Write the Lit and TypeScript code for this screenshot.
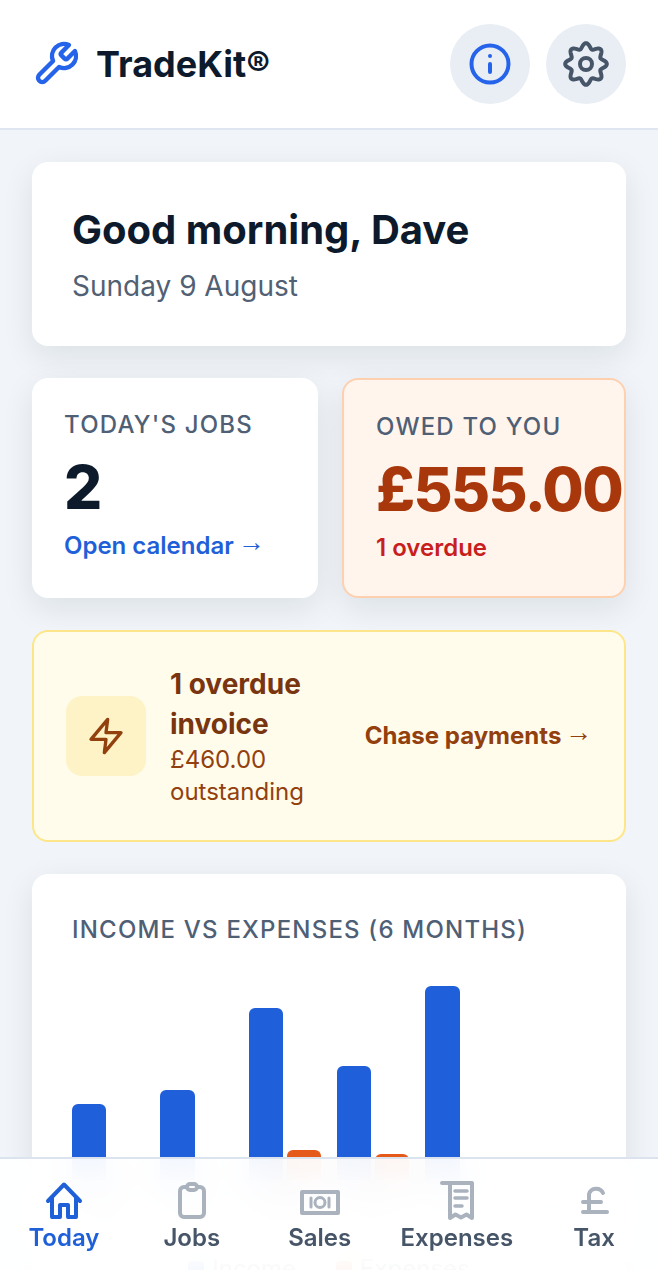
import { css, html, LitElement, svg } from "lit";
import { customElement } from "lit/decorators.js";
import { classMap } from "lit/directives/class-map.js";

// wavy 8-lobe outline for the settings cog
function gearPath() {
  const pts: string[] = [];
  for (let i = 0; i < 160; i++) {
    const t = (i / 160) * Math.PI * 2;
    const r = 18.2 + 2.6 * Math.cos(8 * t);
    pts.push(`${(24 + r * Math.sin(t)).toFixed(2)} ${(24 - r * Math.cos(t)).toFixed(2)}`);
  }
  return "M" + pts.join("L") + "Z";
}

const months = [
  { label: "Mar", income: 76, expense: 0 },
  { label: "Apr", income: 90, expense: 0 },
  { label: "May", income: 172, expense: 30 },
  { label: "Jun", income: 114, expense: 26 },
  { label: "Jul", income: 194, expense: 0 },
  { label: "Aug", income: 0, expense: 0 },
];

const navIcons = {
  home: svg`<path d="M6 22 22 5.5 38 22" /><path d="M10 19v19h8V26h8v12h8V19" />`,
  jobs: svg`<rect x="10" y="8" width="24" height="30" rx="4" /><rect x="17" y="5" width="10" height="6" rx="3" fill="#fff" />`,
  sales: svg`<rect x="4" y="13" width="36" height="21" /><path d="M13 19v9M31 19v9" stroke-width="3" /><circle cx="22" cy="23.5" r="5" stroke-width="3" />`,
  expenses: svg`<path d="M7 4H37V39L31.5 35.5 26 38.5 20.5 35.5 15 39V4" /><path d="M20 12h12M20 19h12M20 27h7" stroke-width="3.5" />`,
  tax: svg`<path d="M31 14a7.5 7.5 0 0 0-14 1v18" /><path d="M11 33h24M11 23h18" />`,
};

const navItems: { key: keyof typeof navIcons; label: string; active?: boolean }[] = [
  { key: "home", label: "Today", active: true },
  { key: "jobs", label: "Jobs" },
  { key: "sales", label: "Sales" },
  { key: "expenses", label: "Expenses" },
  { key: "tax", label: "Tax" },
];

@customElement("app-root")
export class AppRoot extends LitElement {
  static styles = css`
    :host {
      display: block;
      position: relative;
      height: 1270px;
      overflow: hidden;
      background: #f1f5f9;
      font-family: Inter, "Liberation Sans", sans-serif;
      color: #0c1a2c;
    }

    svg {
      display: block;
      fill: none;
      stroke: currentColor;
      stroke-linecap: round;
      stroke-linejoin: round;
    }

    .arrow {
      margin-left: -2px;
      font-family: "Liberation Sans", sans-serif;
      font-size: 27px;
      font-weight: 700;
      line-height: 0;
      vertical-align: 3px;
    }

    .header {
      display: flex;
      align-items: center;
      justify-content: space-between;
      height: 128px;
      padding: 0 32px;
      background: #fff;
      border-bottom: 2px solid #dfe5f1;
    }

    .brand {
      display: flex;
      align-items: center;
      gap: 16px;
      font-size: 36px;
      line-height: 40px;
      font-weight: 700;
      color: #2563eb;
    }

    .brand span {
      color: #0c1a2c;
    }

    .header-actions {
      display: flex;
      gap: 16px;
    }

    .round-btn {
      display: flex;
      align-items: center;
      justify-content: center;
      width: 80px;
      height: 80px;
      border-radius: 50%;
      background: #e9eef5;
      color: #475569;
    }

    .round-btn.info {
      color: #2563eb;
    }

    .content {
      display: flex;
      flex-direction: column;
      gap: 32px;
      padding: 32px;
    }

    .card {
      background: #fff;
      border-radius: 16px;
      box-shadow: 0 10px 32px rgba(15, 23, 42, 0.09);
    }

    .greeting {
      padding: 40px;
    }

    .greeting h1 {
      margin: 0 0 8px;
      font-size: 40px;
      line-height: 56px;
      font-weight: 700;
    }

    .greeting p {
      margin: 0;
      font-size: 28px;
      line-height: 40px;
      color: #526074;
    }

    .stats {
      display: grid;
      grid-template-columns: 286fr 284fr;
      gap: 24px;
    }

    .stat {
      min-width: 0;
      padding: 32px;
    }

    .stat.owed {
      background: #fff5ed;
      border: 2px solid #fed0b0;
    }

    .stat-label {
      font-size: 24px;
      line-height: 30px;
      font-weight: 500;
      letter-spacing: 1.2px;
      color: #4f5f76;
    }

    .stat-value {
      margin: 11px 0 6px;
      font-size: 60px;
      line-height: 72px;
      font-weight: 800;
      letter-spacing: -1.6px;
      white-space: nowrap;
    }

    .owed .stat-value {
      color: #a8380b;
    }

    .stat-foot {
      font-size: 24px;
      line-height: 33px;
      font-weight: 600;
      color: #1f60d8;
    }

    .owed .stat-foot {
      color: #c81e1e;
    }

    .alert {
      display: flex;
      align-items: center;
      gap: 24px;
      padding: 32px;
      background: #fffcec;
      border: 2px solid #fde68a;
      border-radius: 16px;
      color: #78350f;
    }

    .alert-icon {
      display: flex;
      flex: none;
      align-items: center;
      justify-content: center;
      width: 80px;
      height: 80px;
      border-radius: 16px;
      background: #fef3c7;
      color: #92400e;
    }

    .alert-text {
      flex: 1;
      min-width: 0;
    }

    .alert-title {
      font-size: 28px;
      line-height: 40px;
      font-weight: 700;
    }

    .alert-sub {
      font-size: 24px;
      line-height: 32px;
      color: #92400e;
    }

    .alert-link {
      flex: none;
      font-size: 24px;
      line-height: 32px;
      font-weight: 700;
      white-space: nowrap;
      color: #92400e;
    }

    .chart-card {
      padding: 40px;
    }

    .chart-title {
      font-size: 24px;
      line-height: 32px;
      font-weight: 500;
      letter-spacing: 1.2px;
      color: #4f5f76;
    }

    .chart {
      display: grid;
      grid-template-columns: repeat(6, 1fr);
      gap: 16px;
      margin-top: 34px;
    }

    .month {
      display: flex;
      flex-direction: column;
      min-width: 0;
    }

    .bars {
      display: flex;
      align-items: flex-end;
      gap: 4px;
      height: 200px;
    }

    .bar {
      flex: 1;
      border-radius: 6px 6px 0 0;
    }

    .bar.income {
      background: #1f5fd9;
    }

    .bar.expense {
      background: #e5591b;
    }

    .month-label {
      margin-top: 12px;
      font-size: 22px;
      line-height: 28px;
      text-align: center;
      color: #526074;
    }

    .legend {
      display: flex;
      justify-content: center;
      gap: 40px;
      margin-top: 34px;
      font-size: 24px;
      line-height: 30px;
      color: #526074;
    }

    .legend-item {
      display: flex;
      align-items: center;
      gap: 8px;
    }

    .swatch {
      flex: none;
      width: 16px;
      height: 16px;
      border-radius: 4px;
    }

    .nav {
      position: absolute;
      left: 0;
      right: 0;
      bottom: 0;
      display: flex;
      padding: 20px 0 17px;
      background: rgba(255, 255, 255, 0.93);
      border-top: 2px solid #dbe3ee;
      backdrop-filter: blur(20px);
    }

    .nav-item {
      display: flex;
      flex: 1 1 0;
      flex-direction: column;
      align-items: center;
      padding: 0 17px;
      font-size: 24px;
      line-height: 30px;
      font-weight: 600;
      color: #475569;
    }

    .nav-item svg {
      color: #aab2be;
    }

    .nav-item.active,
    .nav-item.active svg {
      color: #1f60d8;
    }
  `;

  render() {
    return html`
      <header class="header">
        <div class="brand">
          <svg width="48" height="48" viewBox="0 0 24 24" stroke-width="2.2">
            <path d="M14.7 6.3a1 1 0 0 0 0 1.4l1.6 1.6a1 1 0 0 0 1.4 0l3.77-3.77a6 6 0 0 1-7.94 7.94l-6.91 6.91a2.12 2.12 0 0 1-3-3l6.91-6.91a6 6 0 0 1 7.94-7.94l-3.76 3.76z" />
          </svg>
          <span>TradeKit®</span>
        </div>
        <div class="header-actions">
          <div class="round-btn info">
            <svg width="48" height="48" viewBox="0 0 48 48" stroke-width="4">
              <circle cx="24" cy="24" r="18.5" />
              <path d="M24 24v8M24 16h.02" />
            </svg>
          </div>
          <div class="round-btn">
            <svg width="48" height="48" viewBox="0 0 48 48" stroke-width="4">
              <path d=${gearPath()} />
              <circle cx="24" cy="24" r="6" />
            </svg>
          </div>
        </div>
      </header>

      <main class="content">
        <section class="card greeting">
          <h1>Good morning, Dave</h1>
          <p>Sunday 9 August</p>
        </section>

        <section class="stats">
          <div class="card stat">
            <div class="stat-label">TODAY'S JOBS</div>
            <div class="stat-value">2</div>
            <div class="stat-foot">Open calendar <span class="arrow">→</span></div>
          </div>
          <div class="card stat owed">
            <div class="stat-label">OWED TO YOU</div>
            <div class="stat-value">£555.00</div>
            <div class="stat-foot">1 overdue</div>
          </div>
        </section>

        <section class="alert">
          <div class="alert-icon">
            <svg width="40" height="40" viewBox="0 0 24 24" stroke-width="2">
              <path d="M13 2 3 14h9l-1 8 10-12h-9l1-8z" />
            </svg>
          </div>
          <div class="alert-text">
            <div class="alert-title">1 overdue invoice</div>
            <div class="alert-sub">£460.00 outstanding</div>
          </div>
          <div class="alert-link">Chase payments <span class="arrow">→</span></div>
        </section>

        <section class="card chart-card">
          <div class="chart-title">INCOME VS EXPENSES (6 MONTHS)</div>
          <div class="chart">
            ${months.map(
              (m) => html`
                <div class="month">
                  <div class="bars">
                    <div class="bar income" style="height: ${m.income}px"></div>
                    <div class="bar expense" style="height: ${m.expense}px"></div>
                  </div>
                  <div class="month-label">${m.label}</div>
                </div>
              `
            )}
          </div>
          <div class="legend">
            <div class="legend-item"><div class="swatch bar income"></div>Income</div>
            <div class="legend-item"><div class="swatch bar expense"></div>Expenses</div>
          </div>
        </section>
      </main>

      <nav class="nav">
        ${navItems.map(
          (item) => html`
            <div class=${classMap({ "nav-item": true, active: !!item.active })}>
              <svg width="44" height="44" viewBox="0 0 44 44" stroke-width="4">${navIcons[item.key]}</svg>
              ${item.label}
            </div>
          `
        )}
      </nav>
    `;
  }
}
